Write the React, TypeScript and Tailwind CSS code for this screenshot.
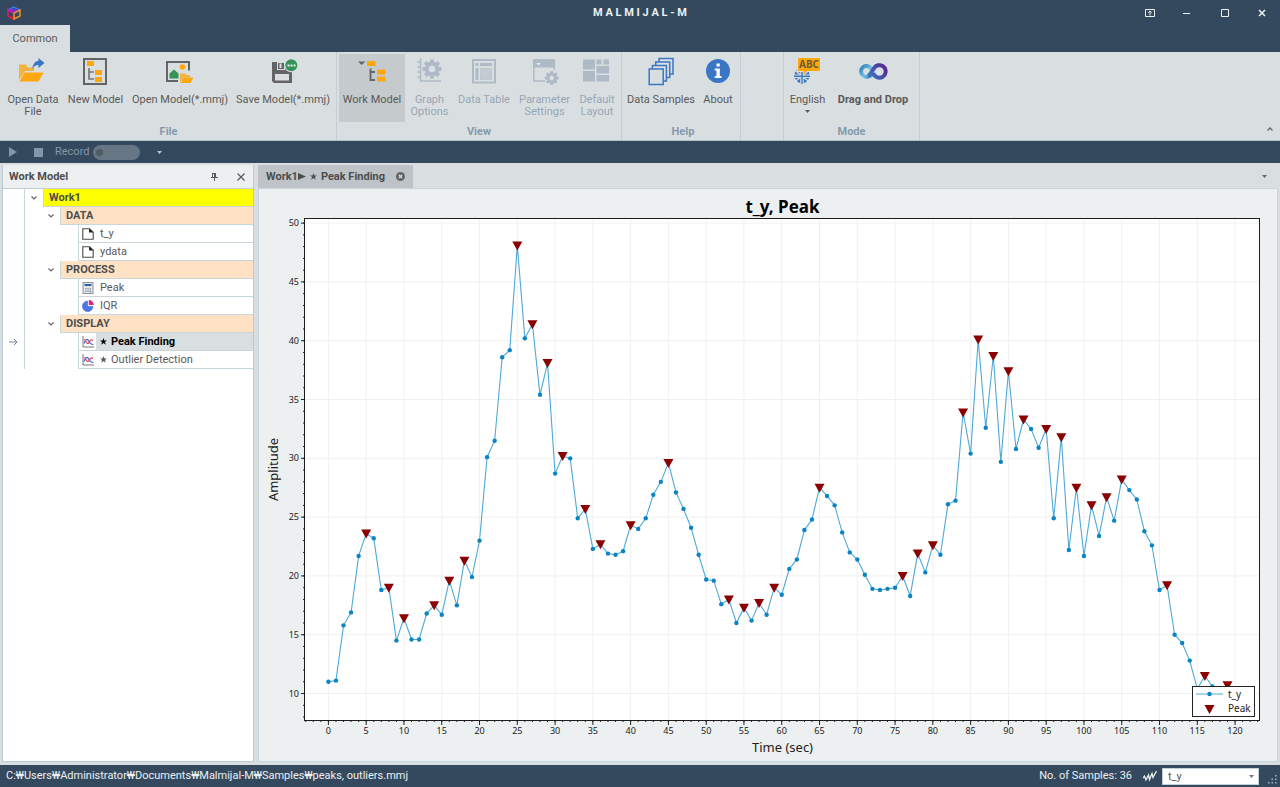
import { useLayoutEffect, useRef, useState } from 'react';
import type { ReactNode } from 'react';

const SAMPLES = [
  11.0, 11.1, 15.8, 16.9, 21.7, 23.6, 23.2, 18.8, 19.0, 14.5,
  16.4, 14.6, 14.6, 16.8, 17.5, 16.7, 19.6, 17.5, 21.3, 19.9,
  23.0, 30.1, 31.5, 38.6, 39.2, 48.1, 40.2, 41.4, 35.4, 38.1,
  28.7, 30.2, 30.0, 24.9, 25.7, 22.3, 22.7, 21.9, 21.8, 22.1,
  24.3, 24.0, 24.9, 26.9, 28.0, 29.6, 27.1, 25.7, 24.1, 21.8,
  19.7, 19.6, 17.6, 18.0, 16.0, 17.3, 16.2, 17.7, 16.7, 19.0,
  18.4, 20.6, 21.4, 23.9, 24.8, 27.5, 26.8, 26.0, 23.7, 22.0,
  21.4, 20.1, 18.9, 18.8, 18.9, 19.0, 20.0, 18.3, 21.9, 20.3,
  22.6, 21.8, 26.1, 26.4, 33.9, 30.4, 40.1, 32.6, 38.7, 29.7,
  37.4, 30.8, 33.3, 32.5, 30.9, 32.5, 24.9, 31.8, 22.2, 27.5,
  21.7, 26.0, 23.4, 26.7, 24.7, 28.2, 27.3, 26.5, 23.8, 22.6,
  18.8, 19.2, 15.0, 14.3, 12.8, 10.4, 11.5, 10.6, 9.8, 10.7, 9.6,
];

const PEAKS = [
  5, 8, 10, 14, 16, 18, 25, 27, 29, 31, 34, 36, 40, 45, 53, 55, 57, 59,
  65, 76, 78, 80, 84, 86, 88, 90, 92, 95, 97, 99, 101, 103, 105, 111, 116, 119,
];

const X_MIN = -3.1;
const X_MAX = 123.3;
const Y_MIN = 7.75;
const Y_MAX = 50.35;

function range(start: number, end: number, step = 1) {
  const out: number[] = [];
  for (let v = start; v <= end; v += step) out.push(v);
  return out;
}

function PeakChart() {
  const boxRef = useRef<HTMLDivElement>(null);
  const [size, setSize] = useState({ width: 1017, height: 572 });

  useLayoutEffect(() => {
    const el = boxRef.current;
    if (!el) return;
    const measure = () => setSize({ width: el.clientWidth, height: el.clientHeight });
    measure();
    const observer = new ResizeObserver(measure);
    observer.observe(el);
    return () => observer.disconnect();
  }, []);

  const left = 46;
  const top = 30;
  const right = size.width - 17;
  const bottom = size.height - 41;
  const x = (v: number) => left + ((v - X_MIN) / (X_MAX - X_MIN)) * (right - left);
  const y = (v: number) => bottom - ((v - Y_MIN) / (Y_MAX - Y_MIN)) * (bottom - top);
  const triangle = (cx: number, cy: number) =>
    `${cx - 5},${cy - 4} ${cx + 5},${cy - 4} ${cx},${cy + 5}`;

  return (
    <div ref={boxRef} className="min-h-0 min-w-0 flex-1 overflow-hidden">
      <svg
        width={size.width}
        height={size.height}
        role="img"
        aria-label="t_y, Peak"
        className="block font-['Noto_Sans',sans-serif]"
      >
        <text x={(left + right) / 2} y="24" textAnchor="middle" className="fill-black text-[17px] font-bold">
          t_y, Peak
        </text>
        <rect x={left} y={top} width={right - left} height={bottom - top} fill="#fff" />

        {range(0, 120, 5).map((v) => (
          <g key={v}>
            <line x1={x(v)} x2={x(v)} y1={top} y2={bottom} stroke="#f0f0f0" />
            <line x1={x(v)} x2={x(v)} y1={bottom} y2={bottom + 5} stroke="#222" />
            <text x={x(v)} y={bottom + 14} textAnchor="middle" className="fill-[#222] text-[9px]">
              {v}
            </text>
          </g>
        ))}
        {range(-3, 123).map((v) => (
          <line key={v} x1={x(v)} x2={x(v)} y1={bottom} y2={bottom + 2} stroke="#222" />
        ))}
        {range(10, 50, 5).map((v) => (
          <g key={v}>
            <line x1={left} x2={right} y1={y(v)} y2={y(v)} stroke="#f0f0f0" />
            <line x1={left - 4} x2={left} y1={y(v)} y2={y(v)} stroke="#222" />
            <text x={left - 6} y={y(v) + 3} textAnchor="end" className="fill-[#222] text-[9px]">
              {v}
            </text>
          </g>
        ))}
        {range(8, 50).map((v) => (
          <line key={v} x1={left - 2} x2={left} y1={y(v)} y2={y(v)} stroke="#222" />
        ))}

        <polyline
          points={SAMPLES.map((v, i) => `${x(i)},${y(v)}`).join(' ')}
          fill="none"
          stroke="#4fa9d6"
          strokeWidth="1.1"
        />
        {SAMPLES.map((v, i) => (
          <circle key={i} cx={x(i)} cy={y(v)} r="2.2" fill="#0a84c4" />
        ))}
        {PEAKS.map((i) => (
          <polygon key={i} points={triangle(x(i), y(SAMPLES[i]))} fill="#8b0000" />
        ))}

        <rect
          x={left - 0.5}
          y={top - 0.5}
          width={right - left}
          height={bottom - top + 1}
          fill="none"
          stroke="#1c1c1c"
        />
        <text x={(left + right) / 2} y={size.height - 9} textAnchor="middle" className="fill-[#222] text-[13px]">
          Time (sec)
        </text>
        <text
          transform={`translate(19 ${(top + bottom) / 2}) rotate(-90)`}
          textAnchor="middle"
          className="fill-[#222] text-[13px]"
        >
          Amplitude
        </text>

        <g transform={`translate(${right - 68} ${bottom - 34})`}>
          <rect x="0.5" y="0.5" width="62" height="30" fill="#fff" stroke="#222" />
          <line x1="4" x2="31" y1="8" y2="8" stroke="#4fa9d6" />
          <circle cx="17.500" cy="8" r="2.2" fill="#0a84c4" />
          <polygon points={triangle(17.5, 23)} fill="#8b0000" />
          <text x="36" y="12" className="fill-[#222] text-[10px]">t_y</text>
          <text x="36" y="26" className="fill-[#222] text-[10px]">Peak</text>
        </g>
      </svg>
    </div>
  );
}

function Icon32({ children }: { children: ReactNode }) {
  return (
    <svg width="32" height="32" viewBox="0 0 32 32" fill="none" aria-hidden="true" className="shrink-0">
      {children}
    </svg>
  );
}

function Gear({ cx, cy, r, hole }: { cx: number; cy: number; r: number; hole: string }) {
  return (
    <g transform={`translate(${cx} ${cy})`}>
      {[0, 45, 90, 135].map((a) => (
        <rect key={a} x={-r * 0.22} y={-r} width={r * 0.44} height={r * 2} transform={`rotate(${a})`} fill="#aebac6" />
      ))}
      <circle r={r * 0.76} fill="#aebac6" />
      <circle r={r * 0.34} fill={hole} />
    </g>
  );
}

const icons = {
  openData: (
    <Icon32>
      <path d="M2 25V9.500h7l2 3h6v3.500H8z" fill="#f3b33f" />
      <path d="M7.500 17.500h19L21.500 26.500h-19z" fill="#ffa70f" />
      <path d="M15.300 14c.7-5 3-8 6.200-8.200V3l6 5-6 5v-3c-2.700-.2-4.600 1.200-6.200 4z" fill="#3b76c5" />
    </Icon32>
  ),
  newModel: (
    <Icon32>
      <rect x="4" y="4" width="22" height="25" stroke="#646464" strokeWidth="2" />
      <rect x="7" y="6" width="7" height="5" fill="#ffa70f" />
      <path d="M9 13v11h5M9 17h5" stroke="#777" strokeWidth="1.700" />
      <rect x="15" y="15" width="7" height="5" fill="#ffa70f" />
      <rect x="15" y="22" width="7" height="5" fill="#ffa70f" />
    </Icon32>
  ),
  openModel: (
    <Icon32>
      <path d="M14 26H3V7h22v8.500" stroke="#646464" strokeWidth="2" />
      <path d="M5.500 23.500v-5l4.500-4 4.500 4v5z" fill="#359258" />
      <circle cx="18.500" cy="12" r="2.800" fill="#ffa70f" />
      <path d="M16 27v-8.500h5l1 1.500h4v2.500h-6.500z" fill="#f3b33f" />
      <path d="M19.500 22.500h10L26.500 28h-10z" fill="#ffa70f" />
    </Icon32>
  ),
  saveModel: (
    <Icon32>
      <path d="M5 7h15v9h5v12H7l-2-2z" fill="#646464" />
      <path d="M10 7h8v8h-8z" fill="#d9dfe1" />
      <path d="M11 8h6v6h-6z" fill="#646464" />
      <rect x="12.500" y="8.500" width="2" height="4.500" fill="#d9dfe1" />
      <rect x="8" y="19" width="14" height="6.500" fill="#d9dfe1" />
      <circle cx="24.300" cy="10.300" r="7" fill="#d9dfe1" />
      <circle cx="24.300" cy="10.300" r="6" fill="#359258" />
      <path d="M20.500 9.500h2v2h-2zM23.500 9.500h2v2h-2zM26.500 9.500h2v2h-2z" fill="#e8f2ec" />
    </Icon32>
  ),
  workModel: (
    <Icon32>
      <path d="M2 6.500h7.500L5.700 10z" fill="#666" />
      <rect x="11" y="6" width="8.500" height="5" fill="#ffa70f" />
      <path d="M14.500 13.500V25h4.500M14.500 17h4.500" stroke="#666" strokeWidth="1.900" />
      <rect x="21" y="14.500" width="8.500" height="5" fill="#ffa70f" />
      <rect x="21" y="21.500" width="8.500" height="5" fill="#ffa70f" />
    </Icon32>
  ),
  graphOptions: (
    <Icon32>
      <path d="M6.500 3v23H27M3.500 7h3M3.500 12h3M3.500 17h3M3.500 22h3" stroke="#aebac6" strokeWidth="1.500" />
      <Gear cx={18} cy={14} r={9.500} hole="#d9dfe1" />
    </Icon32>
  ),
  dataTable: (
    <Icon32>
      <rect x="5" y="5" width="22" height="22.500" stroke="#aebac6" strokeWidth="2" />
      <rect x="7.500" y="8" width="3" height="3" fill="#aebac6" />
      <rect x="12" y="8" width="12" height="3" fill="#aebac6" />
      <rect x="7.500" y="13" width="3" height="12" fill="#aebac6" />
      <rect x="12.500" y="13.500" width="11" height="11" fill="#c5cbd3" stroke="#bfc7cf" />
    </Icon32>
  ),
  parameterSettings: (
    <Icon32>
      <path d="M16 26H4.800V5h20.400v10" stroke="#aebac6" strokeWidth="1.500" />
      <rect x="4" y="4.500" width="22" height="8" fill="#aebac6" />
      <path d="M7 8h5l-2.500 2.500z" fill="#e4e9ea" />
      <Gear cx={22.700} cy={23} r={6.800} hole="#d9dfe1" />
    </Icon32>
  ),
  defaultLayout: (
    <Icon32>
      <path
        d="M2 4.500h12v10H2zM2 16h12v10.500H2zM15.500 4.500h5v5h-5zM22.500 4.500h5.500v5h-5.500zM15.500 11H28v7.500H15.500zM15.500 20H28v6.500H15.500z"
        fill="#aebac6"
      />
    </Icon32>
  ),
  dataSamples: (
    <Icon32>
      <g stroke="#3b76c5" strokeWidth="1.500" fill="#d9dfe1">
        <rect x="14" y="3.500" width="14" height="15.500" />
        <rect x="10.700" y="7" width="14" height="15.500" />
        <rect x="7.400" y="10.500" width="14" height="15.500" />
        <rect x="4.200" y="14" width="14" height="15.500" />
      </g>
    </Icon32>
  ),
  about: (
    <Icon32>
      <circle cx="16" cy="16" r="12" fill="#3b76c5" />
      <path d="M14.500 8.500h3.300v3h-3.300zM12.800 13.500h5v7.500h1.700v2h-6.700v-2h1.700v-5.500h-1.700z" fill="#fff" />
    </Icon32>
  ),
  english: (
    <Icon32>
      <circle cx="10" cy="20.500" r="7.700" fill="#3b76c5" />
      <path d="M10 13v16M2 21.300h16" stroke="#d9dfe1" strokeWidth="3.600" />
      <path d="M2 14.500l16 13M18 14.500L2 27.500" stroke="#d9dfe1" strokeWidth="1.500" />
      <path d="M10 13v16M2 21.300h16" stroke="#3b76c5" strokeWidth="1.400" />
      <path d="M5 2h24v15H15.500L11 21v-4H5z" fill="#d9dfe1" />
      <path d="M6 3h22v13H15l-3.500 4v-4H6z" fill="#ffa70f" />
      <text
        x="17"
        y="13"
        textAnchor="middle"
        className="fill-[#6b5a36] font-['Noto_Sans',sans-serif] text-[10px] font-bold"
      >
        ABC
      </text>
    </Icon32>
  ),
  dragDrop: (
    <Icon32>
      <defs>
        <linearGradient id="loopBlue" x1="3" y1="10" x2="18" y2="23" gradientUnits="userSpaceOnUse">
          <stop stopColor="#246fb0" />
          <stop offset="0.5" stopColor="#6fc3e6" />
          <stop offset="1" stopColor="#1a5fae" />
        </linearGradient>
        <linearGradient id="loopPurple" x1="14" y1="20" x2="28" y2="10" gradientUnits="userSpaceOnUse">
          <stop stopColor="#3b6fb8" />
          <stop offset="1" stopColor="#5d2391" />
        </linearGradient>
      </defs>
      <path
        d="M15.500 18.500c-2 2.500-4 3.300-6 3.300a5.400 5.400 0 1 1 0-10.800c2.500 0 4 1.500 5.500 3.500"
        stroke="url(#loopBlue)"
        strokeWidth="3.800"
      />
      <path
        d="M11 20.800c3-1.500 4-5 6-7.600a6.300 6.300 0 1 1 1.500 8.200c-1-.8-1.800-2-2.500-3"
        stroke="url(#loopPurple)"
        strokeWidth="4"
      />
      <path d="M19 19l3.500-6v6z" fill="#dfe4ee" />
    </Icon32>
  ),
};

function DownArrow({ className = '' }: { className?: string }) {
  return (
    <svg width="5" height="3" viewBox="0 0 5 3" aria-hidden="true" className={className}>
      <path d="M0 0h5L2.500 3z" fill="currentColor" />
    </svg>
  );
}

interface RibbonButtonProps {
  icon: ReactNode;
  label: string;
  width: string;
  active?: boolean;
  disabled?: boolean;
  bold?: boolean;
  menu?: boolean;
}

function RibbonButton({ icon, label, width, active, disabled, bold, menu }: RibbonButtonProps) {
  return (
    <button
      disabled={disabled}
      className={`flex h-[68px] shrink-0 flex-col items-center pt-px ${width} ${
        active ? 'bg-[#c5cacc]' : ''
      } ${disabled ? 'text-[#97a6b5]' : 'text-[#595959]'} ${bold ? 'font-bold' : ''}`}
    >
      {icon}
      <span className="mt-[7px] text-center leading-3 whitespace-pre">{label}</span>
      {menu && <DownArrow className="mt-1" />}
    </button>
  );
}

function RibbonGroup({ title, className = '', children }: { title?: string; className?: string; children?: ReactNode }) {
  return (
    <section className={`flex shrink-0 flex-col justify-between border-r border-[#c6d0d4] pt-[2px] ${className}`}>
      <div className="flex">{children}</div>
      {title && <h2 className="text-center leading-4 font-bold text-[#8599ad]">{title}</h2>}
    </section>
  );
}

function TitleBar() {
  return (
    <header className="grid h-[25px] shrink-0 grid-cols-[1fr_auto_1fr] items-center">
      <svg width="14" height="14" viewBox="0 0 14 14" fill="none" className="ml-[7px]" aria-hidden="true" strokeWidth="1.500">
        <path d="M1 4l6-3 6 3-6 3z" fill="#3b43b8" stroke="#2e7fe8" />
        <path d="M1 4l6 3v6L1 10z" stroke="#d3149e" />
        <path d="M1 8v2l6 3V9" stroke="#e0202e" />
        <path d="M13 4v6l-6 3V7z" stroke="#e99524" />
        <path d="M3 3.200l4 2 4-2" stroke="#8a2bd0" />
      </svg>
      <h1 className="font-bold text-[#ecf0f1]">M A L M I J A L - M</h1>
      <div className="flex justify-end text-[#ecf0f1]">
        <button aria-label="Ribbon display options" className="flex h-6 w-[37px] items-center justify-center">
          <svg width="10" height="8" viewBox="0 0 10 8" fill="none" stroke="currentColor">
            <path d="M.5.5h9v7h-9zM5 6.500V2M3.300 3.700L5 2l1.700 1.700" />
          </svg>
        </button>
        <button aria-label="Minimize" className="flex h-6 w-[38px] items-center justify-center">
          <svg width="8" height="8" viewBox="0 0 8 8" stroke="currentColor">
            <path d="M0 4.500h7" />
          </svg>
        </button>
        <button aria-label="Maximize" className="flex h-6 w-[37px] items-center justify-center">
          <svg width="8" height="8" viewBox="0 0 8 8" fill="none" stroke="currentColor">
            <path d="M.5.5h7v7h-7z" />
          </svg>
        </button>
        <button aria-label="Close" className="flex h-6 w-[37px] items-center justify-center">
          <svg width="8" height="8" viewBox="0 0 8 8" stroke="currentColor" strokeWidth="1.600">
            <path d="M1 1l6 6M7 1L1 7" />
          </svg>
        </button>
      </div>
    </header>
  );
}

function Ribbon() {
  return (
    <div className="flex h-[89px] shrink-0 border-b border-[#b4bfc4] bg-[#d9dfe1]">
      <RibbonGroup title="File" className="pr-[2px] pl-[3px]">
        <RibbonButton icon={icons.openData} label={'Open Data\nFile'} width="w-[60px]" />
        <RibbonButton icon={icons.newModel} label="New Model" width="w-[65px]" />
        <RibbonButton icon={icons.openModel} label="Open Model(*.mmj)" width="w-[104px]" />
        <RibbonButton icon={icons.saveModel} label="Save Model(*.mmj)" width="w-[102px]" />
      </RibbonGroup>
      <RibbonGroup title="View" className="px-[2px]">
        <RibbonButton icon={icons.workModel} label="Work Model" width="w-[66px]" active />
        <RibbonButton icon={icons.graphOptions} label={'Graph\nOptions'} width="w-[49px]" disabled />
        <RibbonButton icon={icons.dataTable} label="Data Table" width="w-[60px]" disabled />
        <RibbonButton icon={icons.parameterSettings} label={'Parameter\nSettings'} width="w-[61px]" disabled />
        <RibbonButton icon={icons.defaultLayout} label={'Default\nLayout'} width="w-[44px]" disabled />
      </RibbonGroup>
      <RibbonGroup title="Help" className="pl-[4px]">
        <RibbonButton icon={icons.dataSamples} label="Data Samples" width="w-[70px]" />
        <RibbonButton icon={icons.about} label="About" width="w-[44px]" />
      </RibbonGroup>
      <RibbonGroup className="w-[43px]" />
      <RibbonGroup title="Mode" className="px-[2px]">
        <RibbonButton icon={icons.english} label="English" width="w-[43px]" menu />
        <RibbonButton icon={icons.dragDrop} label="Drag and Drop" width="w-[88px]" bold />
      </RibbonGroup>
      <button aria-label="Collapse the ribbon" className="mr-[3px] mb-[5px] ml-auto self-end p-1 text-[#666]">
        <svg width="6" height="4" viewBox="0 0 6 4" fill="none" stroke="currentColor" strokeWidth="1.300">
          <path d="M.5 3.500L3 1l2.500 2.500" />
        </svg>
      </button>
    </div>
  );
}

function RunBar() {
  return (
    <div className="flex h-[22px] shrink-0 items-center text-[#8496a9]">
      <button aria-label="Run" className="ml-[9px]">
        <svg width="8" height="10" viewBox="0 0 8 10">
          <path d="M0 0l8 5-8 5z" fill="currentColor" />
        </svg>
      </button>
      <button aria-label="Stop" className="ml-[17px] size-[9px] bg-[#8496a9]" />
      <label className="ml-3 flex items-center gap-1">
        Record
        <input
          type="checkbox"
          role="switch"
          disabled
          className="h-[15px] w-[47px] appearance-none rounded-full bg-[#667685] before:mt-[4px] before:ml-[3px] before:block before:size-[7px] before:rounded-full before:bg-[#515c66]"
        />
      </label>
      <button aria-label="More run options" className="ml-[17px] text-[#bdc7d0]">
        <DownArrow />
      </button>
    </div>
  );
}

function FileIcon() {
  return (
    <svg width="12" height="12" viewBox="0 0 12 12" aria-hidden="true">
      <path d="M.8.800h6.700l3.700 3.500v6.900H.8z" fill="#fff" stroke="#4a4a4a" strokeWidth="1.100" />
      <path d="M7 .5l4.500 4H7z" fill="#222" />
    </svg>
  );
}

function CalculatorIcon() {
  return (
    <svg width="12" height="12" viewBox="0 0 12 12" aria-hidden="true">
      <rect x="1" y=".5" width="10" height="11" fill="#e4e6e8" stroke="#8d9499" />
      <rect x="2.500" y="2" width="7" height="2" fill="#2d62a8" />
      <path d="M3 6h1.500v1.500H3zM5.300 6h1.500v1.500H5.300zM7.600 6h1.500v1.500H7.600zM3 8.600h1.500v1.500H3zM5.300 8.600h1.500v1.500H5.300z" fill="#9aa2a8" />
      <path d="M7.600 8.600h1.500v1.500H7.600z" fill="#4b82cf" />
    </svg>
  );
}

function PieIcon() {
  return (
    <svg width="12" height="12" viewBox="0 0 12 12" aria-hidden="true">
      <path d="M5.500 1v5.500H11A5.300 5.300 0 1 1 5.500 1z" fill="#4a78ea" stroke="#3a55b5" strokeWidth=".5" />
      <path d="M6.800 0a5 5 0 0 1 5 5h-5z" fill="#e0257c" />
    </svg>
  );
}

function GraphIcon() {
  return (
    <svg width="12" height="12" viewBox="0 0 12 12" fill="none" aria-hidden="true">
      <path d="M1 0v11h11" stroke="#777" />
      <path d="M2 7.500c2-5 3.500-5 5-2s2.500 3 4.500 3" stroke="#3569d8" strokeWidth="1.200" />
      <path d="M2 3.500c2 0 2 4.500 4 4S8 2 11 4.500" stroke="#e34050" strokeWidth="1.200" />
    </svg>
  );
}

interface TreeRow {
  label: string;
  level: 1 | 2 | 3;
  icon?: ReactNode;
  starred?: boolean;
  selected?: boolean;
}

const TREE: TreeRow[] = [
  { label: 'Work1', level: 1 },
  { label: 'DATA', level: 2 },
  { label: 't_y', level: 3, icon: <FileIcon /> },
  { label: 'ydata', level: 3, icon: <FileIcon /> },
  { label: 'PROCESS', level: 2 },
  { label: 'Peak', level: 3, icon: <CalculatorIcon /> },
  { label: 'IQR', level: 3, icon: <PieIcon /> },
  { label: 'DISPLAY', level: 2 },
  { label: 'Peak Finding', level: 3, icon: <GraphIcon />, starred: true, selected: true },
  { label: 'Outlier Detection', level: 3, icon: <GraphIcon />, starred: true },
];

function Star() {
  return (
    <svg width="7" height="7" viewBox="0 0 10 10" aria-hidden="true" className="shrink-0">
      <path d="M5 0l1.300 3.500H10L7.100 5.800 8.200 9.500 5 7.300 1.800 9.500l1.100-3.700L0 3.500h3.700z" fill="currentColor" />
    </svg>
  );
}

function TreeItem({ row }: { row: TreeRow }) {
  const indent = row.level === 1 ? 'pl-[2px]' : row.level === 2 ? 'pl-[19px]' : 'pl-[53px]';
  return (
    <li role="treeitem" aria-level={row.level} aria-selected={!!row.selected} className="flex h-[18px]">
      <span className="flex w-[22px] items-center border-r border-[#c9d7dc] pl-[6px]">
        {row.selected && (
          <svg width="9" height="8" viewBox="0 0 9 8" fill="none" stroke="#7189a6" aria-hidden="true">
            <path d="M0 4h8M5 1l3 3-3 3" />
          </svg>
        )}
      </span>
      <div className={`flex min-w-0 flex-1 ${indent}`}>
        {row.level < 3 && (
          <button aria-label={`Collapse ${row.label}`} className="flex w-[16px] items-center pl-[4px] text-[#666]">
            <svg width="6" height="4" viewBox="0 0 6 4" fill="none" stroke="currentColor" strokeWidth="1.200">
              <path d="M.5.5L3 3 5.500.5" />
            </svg>
          </button>
        )}
        {row.level < 3 ? (
          <span
            className={`flex flex-1 items-center border-b border-l border-[#c9d7dc] pl-[5px] font-bold text-[#4d4d4d] ${
              row.level === 1 ? 'bg-[#ffff00]' : 'bg-[#ffe2c4]'
            }`}
          >
            {row.label}
          </span>
        ) : (
          <span className="flex flex-1 border-b border-l border-[#c9d7dc]">
            <span className="flex w-[17px] items-center justify-center">{row.icon}</span>
            <span
              className={`flex flex-1 items-center gap-1 pl-[4px] ${
                row.selected ? 'bg-[#d9dfe1] font-bold text-black' : 'text-[#595959]'
              }`}
            >
              {row.starred && <Star />}
              {row.label}
            </span>
          </span>
        )}
      </div>
    </li>
  );
}

function WorkModelPanel() {
  return (
    <aside className="flex w-[252px] shrink-0 flex-col border border-t-0 border-[#b9cad0] bg-white">
      <div className="flex h-[24px] shrink-0 items-center border-b border-[#c3d1d6] bg-[#ecf0f1] pl-[6px] text-[#595959]">
        <h2 className="font-bold text-[#4d4d4d]">Work Model</h2>
        <button aria-label="Pin panel" className="mr-[19px] ml-auto">
          <svg width="7" height="8" viewBox="0 0 7 8" fill="none" stroke="currentColor">
            <path d="M1.500 0v4.500M4.500 0v4.500M1.500.5h3M0 4.500h7M3.500 5v3M3.500 0v4" />
          </svg>
        </button>
        <button aria-label="Close panel" className="mr-[8px]">
          <svg width="8" height="8" viewBox="0 0 8 8" stroke="currentColor" strokeWidth="1.200">
            <path d="M.5.5l7 7M7.500.5l-7 7" />
          </svg>
        </button>
      </div>
      <ul role="tree" aria-label="Work Model">
        {TREE.map((row) => (
          <TreeItem key={row.label} row={row} />
        ))}
      </ul>
    </aside>
  );
}

function DocumentArea() {
  return (
    <main className="flex min-w-0 flex-1 flex-col">
      <div className="flex h-[23px] shrink-0 items-center justify-between">
        <div role="tablist" className="flex h-full">
          <div className="flex items-center bg-[#bdc3c7] px-2 font-bold text-[#4d4d4d]">
            <button role="tab" aria-selected="true" className="flex items-center">
              Work1
              <svg width="8" height="7" viewBox="0 0 8 7" aria-hidden="true">
                <path d="M0 0l8 3.500L0 7z" fill="currentColor" />
              </svg>
              <span className="ml-1 flex items-center gap-1">
                <Star />
                Peak Finding
              </span>
            </button>
            <button aria-label="Close tab" className="ml-[11px]">
              <svg width="9" height="9" viewBox="0 0 9 9">
                <circle cx="4.500" cy="4.500" r="4.500" fill="#666" />
                <path d="M3 3l3 3M6 3L3 6" stroke="#dfe3e5" strokeWidth="1.200" />
              </svg>
            </button>
          </div>
        </div>
        <button aria-label="Open documents" className="mr-[11px] text-[#666]">
          <DownArrow />
        </button>
      </div>
      <div className="flex min-h-0 flex-1 border border-[#c9d7dc] bg-[#ecf0f1]">
        <PeakChart />
      </div>
    </main>
  );
}

function StatusBar() {
  return (
    <footer className="flex h-[22px] shrink-0 items-center pr-[3px] pl-[6px] text-[#ecf0f1]">
      <span>C:₩Users₩Administrator₩Documents₩Malmijal-M₩Samples₩peaks, outliers.mmj</span>
      <span className="ml-auto">No. of Samples: 36</span>
      <svg width="14" height="12" viewBox="0 0 14 12" fill="none" stroke="currentColor" aria-hidden="true" className="ml-[11px]">
        <path d="M0 8l1.500-2 1.500 4 2.500-5 1 4.500L9 3.500l1 4L13.500 1" strokeWidth="1.300" />
      </svg>
      <div className="relative ml-[5px]">
        <select
          aria-label="Signal"
          className="block h-[17px] w-[97px] appearance-none border border-[#c3d1d6] bg-white pl-[5px] leading-[15px] text-[#595959]"
        >
          <option>t_y</option>
        </select>
        <DownArrow className="pointer-events-none absolute top-[7px] right-[5px] text-[#777]" />
      </div>
      <svg width="9" height="9" viewBox="0 0 9 9" fill="#a3afba" aria-hidden="true" className="mt-[6px] ml-[9px]">
        <path d="M7 0h1.500v1.500H7zM7 3.500h1.500V5H7zM7 7h1.500v1.500H7zM3.500 3.500H5V5H3.500zM3.500 7H5v1.500H3.500zM0 7h1.500v1.500H0z" />
      </svg>
    </footer>
  );
}

export default function App() {
  return (
    <div className="flex h-screen flex-col overflow-hidden bg-[#34495e] font-[Roboto,'Noto_Sans',sans-serif] text-[11px] leading-4">
      <TitleBar />
      <nav role="tablist" className="flex h-[27px] shrink-0">
        <button role="tab" aria-selected="true" className="w-[70px] bg-[#d9dfe1] text-[#595959]">
          Common
        </button>
      </nav>
      <Ribbon />
      <RunBar />
      <div className="flex min-h-0 flex-1 gap-1 bg-[#d9dfe1] pt-[2px] pr-[2px] pb-[3px] pl-[2px]">
        <WorkModelPanel />
        <DocumentArea />
      </div>
      <StatusBar />
    </div>
  );
}
